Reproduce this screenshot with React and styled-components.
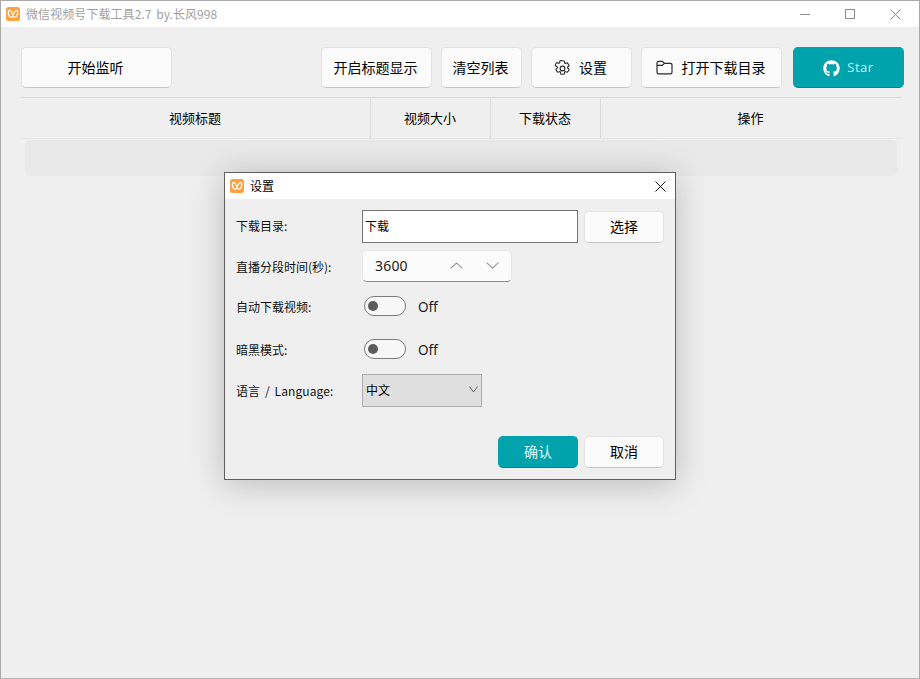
import React from "react";
import styled, { createGlobalStyle } from "styled-components";
import { FaGithub } from "react-icons/fa";

const Global = createGlobalStyle`
  html, body { margin: 0; padding: 0; background: #efefef; }
  body { font-family: "Noto Sans CJK SC", "Noto Sans", sans-serif; color: #000; }
  * { box-sizing: border-box; }
`;

const Win = styled.div`
  position: relative; width: 920px; height: 679px; background: #efefef;
  border: 1px solid #a9a9a9; border-bottom-color: #b5b5b5; overflow: hidden;
`;
const TitleBar = styled.div`
  height: 26px; background: #fff; display: flex; align-items: center; padding-left: 5px;
`;
const AppTitle = styled.span`
  margin-left: 6px; padding-bottom: 1px; font-size: 12px; line-height: 25px; word-spacing: 2px;
  letter-spacing: ${p => p.$dim ? ".07px" : "0"};
  color: ${p => p.$dim ? "#9f9f9f" : "#000"};
  font-family: "Noto Sans CJK SC", sans-serif;
`;
const WinControls = styled.div`
  margin-left: auto; display: flex; align-items: center; gap: 35px; padding-right: 18px; height: 26px;
`;
const Toolbar = styled.div`
  display: flex; align-items: center; padding: 20px 15px 0 20px; height: 61px;
`;
const Btn = styled.button`
  display: flex; align-items: center; justify-content: center; gap: ${p => p.$gap || 0}px;
  width: ${p => p.$w}px; height: ${p => p.$h || 41}px; margin-left: ${p => p.$ml || 0}px;
  padding: 0 ${p => p.$h ? 0 : 2}px 2px 0; font: 14px "Noto Sans CJK SC", sans-serif; color: #000;
  background: ${p => p.$accent ? "#00a2ab" : "#fbfbfb"};
  border: 1px solid ${p => p.$accent ? "#00a2ab" : "#e3e3e3"};
  border-bottom-color: ${p => p.$accent ? "#00848c" : "#c6c6c6"};
  border-radius: 5px;
  ${p => p.$accent && "color: #e6f6f7;"}
`;
const IconSlot = styled.span`
  display: flex; margin: ${p => p.$mt ?? 3}px 0 0 ${p => p.$ml || 0}px;
`;
const StarLabel = styled.span`
  font: 13px "Open Sans", sans-serif; letter-spacing: .5px; color: #cfeef0; margin-top: 1px;
`;
const Head = styled.div`
  display: grid; grid-template-columns: 349px 120px 110px 301px; height: 42px; margin: 9px 18px 0 20px;
  border-top: 1px solid #dcdcdc; border-bottom: 1px solid #e6e6e6;
`;
const HeadCell = styled.div`
  display: flex; align-items: center; justify-content: center; font-size: 13px; color: #000;
  padding: 0 1px 2px 0;
  border-left: ${p => p.$first ? "none" : "1px solid #dcdcdc"};
`;
const EmptyRow = styled.div`
  height: 36px; margin: 1px 22px 0 24px; background: #e9e9e9; border-radius: 5px;
`;

const Dialog = styled.div`
  position: absolute; left: 223px; top: 171px; width: 452px; height: 308px;
  background: #efefef; border: 1px solid #5f5f5f; box-shadow: 0 4px 32px rgba(0,0,0,.22);
`;
const DialogBar = styled.div`
  height: 26px; background: #fff; display: flex; align-items: center; padding-left: 5px; justify-content: space-between; padding-right: 9px;
`;
const DialogHeading = styled.div`
  display: flex; align-items: center;
`;
const DialogBody = styled.div`
  padding: 11px 11px 0 11px; height: 280px; display: flex; flex-direction: column;
`;
const Row = styled.div`
  display: flex; align-items: center; height: ${p => p.$h}px; margin-top: ${p => p.$mt || 0}px;
`;
const Label = styled.div`
  width: 126px; flex: none; font-size: 12px; color: #111; white-space: nowrap;
  padding-bottom: ${p => p.$lift || 0}px;
  word-spacing: ${p => p.$wide ? "2px" : "0"}; letter-spacing: ${p => p.$wide ? ".1px" : "0"};
`;
const PathInput = styled.div`
  width: 216px; height: 33px; background: #fff; border: 1px solid #757575; font-size: 12px;
  padding: 0 0 2px 2px; display: flex; align-items: center;
`;
const Spin = styled.div`
  width: 150px; height: 32px; background: #fbfbfb; border: 1px solid #e8e8e8; border-bottom: 1px solid #8a8a8a;
  border-radius: 5px; display: flex; align-items: center; padding: 0 0 1px 12px;
  font: 14px "Noto Sans", sans-serif; color: #222; letter-spacing: .2px;
`;
const SpinArrows = styled.div`
  margin-left: auto; margin-right: 12px; display: flex; gap: 23px; align-items: center;
`;
const Toggle = styled.div`
  width: 42px; height: 20px; margin-left: 2px; border: 1px solid #7b7b7b; border-radius: 10px;
  background: #f7f7f7; position: relative;
  &::after {
    content: ""; position: absolute; left: 3px; top: 4px; width: 10px; height: 10px; border-radius: 50%; background: #5c5c5c;
  }
`;
const ToggleText = styled.span`
  margin-left: 12px; padding-top: 2px; font: 13.5px "Noto Sans", sans-serif; color: #222;
`;
const Select = styled.div`
  width: 120px; height: 33px; background: #dfdfdf; border: 1px solid #adadad; display: flex; align-items: center;
  padding: 0 3px 2px 3px; font-size: 12px; justify-content: space-between;
`;
const Actions = styled.div`
  display: flex; justify-content: flex-end; gap: 6px; margin-top: 29px;
`;

const Logo = ({ s = 14 }) => (
  <svg width={s} height={s} viewBox="0 0 14 14">
    <rect width="14" height="14" rx="2.5" fill="#fda23c" />
    <path d="M2.6 3.6c1.800-.6 3.400 1.600 4.400 4.600 1-3 2.600-5.200 4.400-4.600.8 2.200-.2 6-2 6.600-1.100.3-2-.6-2.400-1.600-.4 1-1.300 1.900-2.400 1.600-1.800-.6-2.800-4.400-2-6.600z" fill="none" stroke="#fff" strokeWidth="1.200" />
  </svg>
);
const Chevron = ({ up, c = "#8a8a8a", w = 13 }) => (
  <svg width={w} height="7" viewBox="0 0 12 7" preserveAspectRatio="none">
    <path d={up ? "M.5 6.500 6 1l5.500 5.500" : "M.5.500 6 6l5.500-5.500"} fill="none" stroke={c} strokeWidth="1" />
  </svg>
);
const Gear = () => (
  <svg width="19" height="19" viewBox="0 0 24 24" fill="none" stroke="#2b2b2b" strokeWidth="1.400" strokeLinejoin="round">
    <path d="M12 2.200c.8 0 1.500.1 2.200.3l.5 2.300c.1.500.6.800 1.100.7l2.300-.7c1 1 1.800 2.200 2.200 3.700l-1.700 1.600c-.4.400-.4.900 0 1.300l1.700 1.600c-.4 1.500-1.200 2.700-2.200 3.700l-2.300-.7c-.5-.1-1 .2-1.100.7l-.5 2.300c-1.400.4-3 .4-4.400 0l-.5-2.300c-.1-.5-.6-.8-1.100-.7l-2.300.7c-1-1-1.800-2.200-2.200-3.700l1.700-1.600c.4-.4.400-.9 0-1.300L2.700 8.300c.4-1.500 1.200-2.700 2.200-3.700l2.300.7c.5.100 1-.2 1.100-.7l.5-2.300c.7-.2 1.400-.3 2.200-.3z" />
    <circle cx="12" cy="12" r="3" />
  </svg>
);
const Folder = () => (
  <svg width="17" height="15" viewBox="0 0 17 15" fill="none" stroke="#2b2b2b" strokeWidth="1.200">
    <path d="M1 3v9.200c0 1 .7 1.700 1.700 1.700h11.600c1 0 1.700-.7 1.700-1.700V5c0-1-.7-1.700-1.700-1.700H8.300L6.300 1.400H2.600C1.700 1.400 1 2.100 1 3z M1 5.300h5.300l2-2" />
  </svg>
);

export default function App() {
  return (
    <>
      <Global />
      <Win>
        <TitleBar>
          <Logo />
          <AppTitle $dim>微信视频号下载工具2.7 by.长风998</AppTitle>
          <WinControls>
            <svg width="10" height="10" viewBox="0 0 10 10"><path d="M0 5.500h10" stroke="#8c8c8c" /></svg>
            <svg width="10" height="10" viewBox="0 0 10 10"><rect x=".5" y=".5" width="9" height="9" fill="none" stroke="#8c8c8c" /></svg>
            <svg width="11" height="11" viewBox="0 0 11 11"><path d="M.5.500l10 10M10.500.500l-10 10" stroke="#8c8c8c" /></svg>
          </WinControls>
        </TitleBar>
        <Toolbar>
          <Btn $w={151}>开始监听</Btn>
          <Btn $w={111} $ml={149}>开启标题显示</Btn>
          <Btn $w={81} $ml={9}>清空列表</Btn>
          <Btn $w={101} $ml={9} $gap={7}><IconSlot $ml={-1}><Gear /></IconSlot>设置</Btn>
          <Btn $w={141} $ml={9} $gap={9}><IconSlot $mt={1}><Folder /></IconSlot>打开下载目录</Btn>
          <Btn $w={111} $ml={11} $gap={7} $accent><IconSlot $ml={2}><FaGithub size={17} color="#fff" /></IconSlot><StarLabel>Star</StarLabel></Btn>
        </Toolbar>
        <Head>
          <HeadCell $first>视频标题</HeadCell>
          <HeadCell>视频大小</HeadCell>
          <HeadCell>下载状态</HeadCell>
          <HeadCell>操作</HeadCell>
        </Head>
        <EmptyRow />
        <Dialog>
          <DialogBar>
            <DialogHeading>
              <Logo />
              <AppTitle>设置</AppTitle>
            </DialogHeading>
            <svg width="11" height="11" viewBox="0 0 11 11"><path d="M.5.500l10 10M10.500.500l-10 10" stroke="#111" /></svg>
          </DialogBar>
          <DialogBody>
            <Row $h={33}>
              <Label $lift={2}>下载目录:</Label>
              <PathInput>下载</PathInput>
              <Btn $w={80} $h={32} $ml={6}>选择</Btn>
            </Row>
            <Row $h={32} $mt={7}>
              <Label>直播分段时间(秒):</Label>
              <Spin>3600<SpinArrows><Chevron up /><Chevron /></SpinArrows></Spin>
            </Row>
            <Row $h={20} $mt={14}>
              <Label>自动下载视频:</Label>
              <Toggle /><ToggleText>Off</ToggleText>
            </Row>
            <Row $h={20} $mt={23}>
              <Label>暗黑模式:</Label>
              <Toggle /><ToggleText>Off</ToggleText>
            </Row>
            <Row $h={33} $mt={15}>
              <Label $wide>语言 / Language:</Label>
              <Select>中文<Chevron c="#555" w={9} /></Select>
            </Row>
            <Actions>
              <Btn $w={80} $h={32} $accent>确认</Btn>
              <Btn $w={80} $h={32}>取消</Btn>
            </Actions>
          </DialogBody>
        </Dialog>
      </Win>
    </>
  );
}
